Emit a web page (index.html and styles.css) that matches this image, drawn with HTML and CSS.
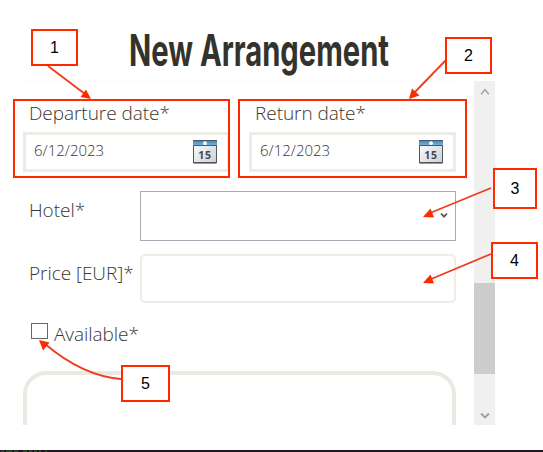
FILE: index.html
```
<!DOCTYPE html>
<html lang="en">
<head>
<meta charset="utf-8">
<title>New Arrangement</title>
<link rel="stylesheet" href="styles.css">
</head>
<body>
<svg class="defs" width="0" height="0">
  <defs>
    <linearGradient id="blue" x1="0" y1="0" x2="0" y2="1"><stop offset="0" stop-color="#3c7db4"/><stop offset="1" stop-color="#72b0df"/></linearGradient>
    <linearGradient id="paper" x1="0" y1="0" x2="1" y2="1"><stop offset="0" stop-color="#fff"/><stop offset="1" stop-color="#ccd0d5"/></linearGradient>
  </defs>
</svg>
<main class="dialog">
  <h1 class="title"><span>New Arrangement</span></h1>
  <div class="viewport">
    <form class="form">
      <div class="dates">
        <div class="field">
          <label class="label">Departure date*</label>
          <div class="date"><span>6/12/2023</span>
            <svg class="calendar" width="24" height="24" viewBox="0 0 24 24"><rect x=".5" y=".5" width="23" height="22.5" rx=".6" fill="url(#paper)" stroke="#53575b"/><path d="M0 0h24v5H0z" fill="url(#blue)"/><path d="M0 .5h24M0 5.5h24" stroke="#4a5965"/><circle cx="12" cy="3.200" r="1.900" fill="#fff"/><path d="M0 22.7h24" stroke="#44484b"/><text x="12" y="19" text-anchor="middle" class="day">15</text></svg>
          </div>
        </div>
        <div class="field">
          <label class="label">Return date*</label>
          <div class="date"><span>6/12/2023</span>
            <svg class="calendar" width="24" height="24" viewBox="0 0 24 24"><rect x=".5" y=".5" width="23" height="22.5" rx=".6" fill="url(#paper)" stroke="#53575b"/><path d="M0 0h24v5H0z" fill="url(#blue)"/><path d="M0 .5h24M0 5.5h24" stroke="#4a5965"/><circle cx="12" cy="3.200" r="1.900" fill="#fff"/><path d="M0 22.7h24" stroke="#44484b"/><text x="12" y="19" text-anchor="middle" class="day">15</text></svg>
          </div>
        </div>
      </div>
      <div class="row hotel">
        <label class="label">Hotel*</label>
        <div class="select"><svg width="8" height="8" viewBox="0 0 8 8"><path d="M1 1.5l3 3.2 3-3.2" fill="none" stroke="#555" stroke-width="1.7"/></svg></div>
      </div>
      <div class="row price">
        <label class="label">Price [EUR]*</label>
        <div class="input"></div>
      </div>
      <div class="check"><span class="box"></span><label class="label">Available*</label></div>
      <div class="area"></div>
    </form>
    <div class="scrollbar">
      <svg class="arrow" width="21" height="20" viewBox="0 0 21 20"><path d="M7 14l4-5 4 5" fill="none" stroke="#a3a3a3" stroke-width="1.5"/></svg>
      <div class="thumb"></div>
      <svg class="arrow down" width="21" height="20" viewBox="0 0 21 20"><path d="M7 8.5l4 4 4-4" fill="none" stroke="#a0a0a0" stroke-width="1.9"/></svg>
    </div>
  </div>
  <div class="edge"><svg width="48" height="2" viewBox="0 0 48 2"><path d="M1 1.2h3m2 0h6m2 0h4m5 0h4m2 0h3m2 0h3m2 0h2m4 0h2" stroke="#3c6b36"/></svg></div>
</main>
<svg class="arrows" width="543" height="452" viewBox="0 0 543 452">
  <g fill="none" stroke="#f23a1c" stroke-width="1.8">
    <path d="M48 66L85 94"/><path d="M446 60L414 93"/><path d="M491 188L430 213"/><path d="M491 254L430 279.5"/><path d="M121 379Q83 376 45 344"/>
  </g>
  <g fill="#ff2a00">
    <path d="M91 99L86 89.500L80.500 97z"/><path d="M409 99L412 88.500L419.500 95.500z"/><path d="M423 217L430.500 208.500L434 217.500z"/><path d="M423 283L430.500 274.500L434 283.500z"/><path d="M39 340L49.500 342.500L43 350.500z"/>
  </g>
</svg>
<div class="mark m-departure"></div>
<div class="mark m-return"></div>
<div class="callout c1">1</div>
<div class="callout c2">2</div>
<div class="callout c3">3</div>
<div class="callout c4">4</div>
<div class="callout c5">5</div>
</body>
</html>
```
FILE: styles.css
```
* { box-sizing: border-box; }
body { margin: 0; background: #fff; overflow: hidden; position: relative; font-family: "Open Sans", sans-serif; color: #38372f; }
.defs { position: absolute; }
.dialog { width: 543px; height: 452px; display: flex; flex-direction: column; }
.title { margin: 0 0 0 129px; height: 81px; width: 261px; padding-top: 20px; font: 700 44px/60px Inter, sans-serif; color: #34332b; white-space: nowrap; }
.title span { display: inline-block; transform: scaleX(.663); transform-origin: 0 0; }
.viewport { display: flex; height: 344px; width: 472px; margin-left: 23px; overflow: hidden; }
.form { width: 433px; margin-right: 18px; border-top: 1px solid #fafafa; }
.label { font-size: 19px; font-weight: 300; line-height: 26px; letter-spacing: -.05px; white-space: nowrap; }
.dates { display: flex; gap: 19px; padding-top: 18px; }
.field { width: 207px; }
.field .label { display: block; padding-left: 6px; height: 32px; }
.date { height: 40px; border: 3px solid #eeebe5; display: flex; align-items: center; justify-content: space-between; padding: 0 10px 0 8px; font-size: 15px; font-weight: 300; }
.date span { position: relative; top: -2px; }
.day { font: 700 10.5px "Open Sans", sans-serif; letter-spacing: .8px; fill: #45494d; }
.row { display: flex; padding-left: 6px; }
.row .label { width: 111px; }
.hotel { margin-top: 19px; }
.hotel .label { padding-top: 6px; }
.select { width: 316px; height: 50px; border: 1px solid #a9a9ae; display: flex; align-items: center; justify-content: flex-end; padding-right: 7px; }
.price { margin-top: 13px; }
.price .label { padding-top: 6px; }
.input { width: 316px; height: 49px; border: 2px solid #f0ece6; border-radius: 5px; }
.check { display: flex; gap: 6px; height: 50px; margin-top: 18px; padding-left: 8px; }
.box { width: 17px; height: 16px; border: 1px solid #686868; margin-top: 2px; }
.area { height: 80px; border: 4px solid #ebe9e1; border-radius: 23px; }
.scrollbar { width: 21px; background: #f0f0f0; display: flex; flex-direction: column; }
.arrow { flex: none; border-bottom: 1px solid #f4f4f4; }
.thumb { height: 91px; margin-top: 182px; background: #cdcdcd; }
.down { margin-top: auto; border: 0; }
.edge { height: 2px; margin-top: 25px; background: #1c191e; display: flex; }
.arrows { position: absolute; left: 0; top: 0; }
.mark { position: absolute; top: 99px; height: 79px; border: 2px solid #ff2a00; }
.m-departure { left: 13px; width: 217px; }
.m-return { left: 238px; width: 229px; }
.callout { position: absolute; border: 2px solid #ff2a00; background: #fff; width: 47px; height: 37px; display: flex; justify-content: center; align-items: center; font: 16px "Liberation Sans", sans-serif; color: #000; }
.c1 { left: 31px; top: 29px; }
.c2 { left: 445px; top: 37px; }
.c3 { left: 493px; top: 168px; width: 44px; height: 41px; }
.c4 { left: 491px; top: 242px; }
.c5 { left: 121px; top: 365px; width: 49px; }
```
